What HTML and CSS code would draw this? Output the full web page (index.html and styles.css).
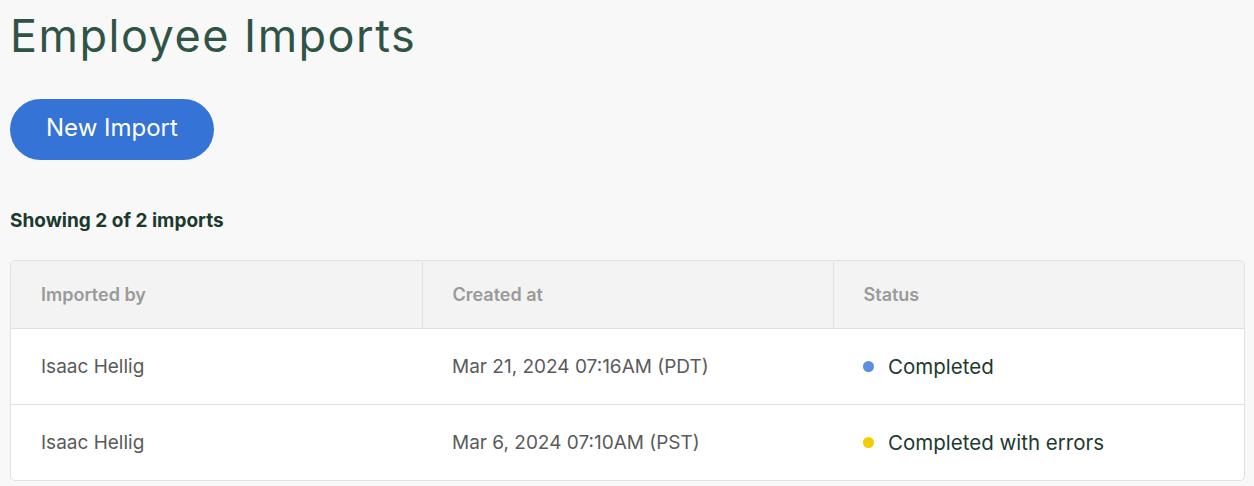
FILE: index.html
```html
<!DOCTYPE html>
<html lang="en">
<head>
  <meta charset="UTF-8">
  <meta name="viewport" content="width=device-width, initial-scale=1.0">
  <title>Employee Imports</title>
  <link rel="stylesheet" href="styles.css">
</head>
<body>
  <main class="page">
    <h1 class="title">Employee Imports</h1>

    <button class="btn-primary" type="button">New Import</button>

    <p class="count">Showing 2 of 2 imports</p>

    <div class="table-card">
      <table class="table">
        <thead>
          <tr>
            <th>Imported by</th>
            <th>Created at</th>
            <th>Status</th>
          </tr>
        </thead>
        <tbody>
          <tr>
            <td>Isaac Hellig</td>
            <td>Mar 21, 2024 07:16AM (PDT)</td>
            <td class="status"><span class="dot dot-done"></span>Completed</td>
          </tr>
          <tr>
            <td>Isaac Hellig</td>
            <td>Mar 6, 2024 07:10AM (PST)</td>
            <td class="status"><span class="dot dot-warn"></span>Completed with errors</td>
          </tr>
        </tbody>
      </table>
    </div>
  </main>
</body>
</html>
```

FILE: styles.css
```css
body {
  font-family: Inter, 'Noto Sans', sans-serif;
  margin: 0;
  padding: 0;
  background: #f8f8f8;
  color: #333;
}
.page {
  padding: 0 9px 0 10px;
}
.title {
  margin: 0;
  padding-top: 8px;
  font-size: 45px;
  font-weight: 400;
  letter-spacing: 1.5px;
  line-height: 56px;
  color: #2f5446;
}
.btn-primary {
  display: block;
  margin-top: 35px;
  height: 61px;
  padding: 0 36px 4px;
  border: none;
  border-radius: 31px;
  background: #3574d6;
  color: white;
  font-family: inherit;
  font-size: 24px;
  cursor: pointer;
}
.count {
  margin: 50px 0 0;
  font-size: 19px;
  font-weight: 700;
  line-height: 22px;
  color: #1b3a2e;
}
.table-card {
  margin-top: 28px;
  background: white;
  border: 1px solid #e1e1e1;
  border-radius: 5px;
  overflow: hidden;
}
.table {
  width: 100%;
  border-collapse: collapse;
  table-layout: fixed;
}
.table th {
  height: 67px;
  padding: 0 30px;
  background: #f3f3f3;
  border-bottom: 1px solid #e1e1e1;
  text-align: left;
  font-size: 18px;
  font-weight: 600;
  color: #9a9a9a;
}
.table th + th {
  border-left: 1px solid #e1e1e1;
}
.table td {
  height: 75px;
  padding: 0 30px;
  font-size: 19px;
  color: #5a5a5a;
}
.table tr + tr td {
  border-top: 1px solid #e1e1e1;
}
.table td.status {
  font-size: 20.5px;
  color: #1e3a2f;
}
.dot {
  display: inline-block;
  width: 11px;
  height: 11px;
  border-radius: 50%;
  margin-right: 14px;
  vertical-align: 2px;
}
.dot-done { background: #5b8ee0; }
.dot-warn { background: #f2cd00; }
```
